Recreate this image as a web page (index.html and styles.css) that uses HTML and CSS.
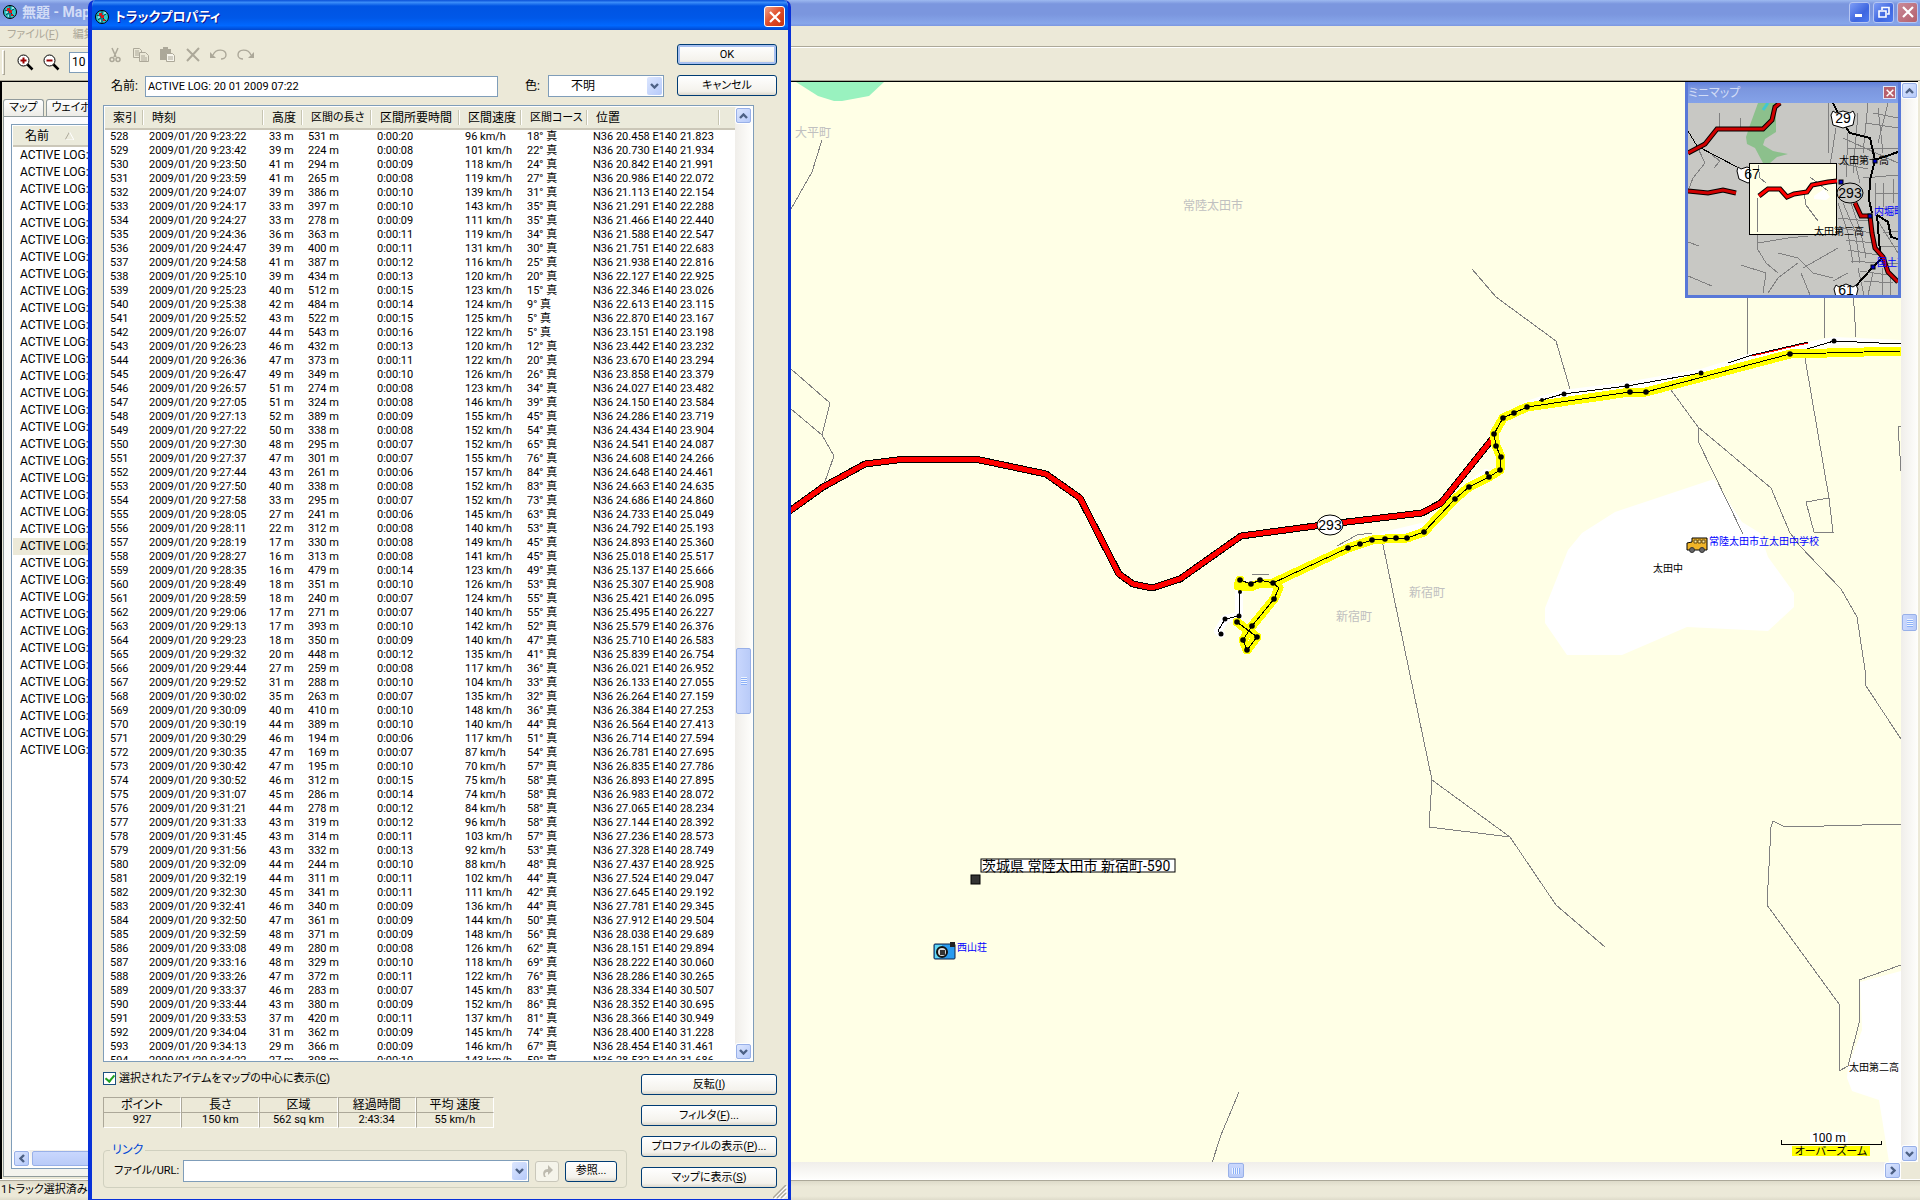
FILE: index.html
```html
<!DOCTYPE html>
<html lang="ja">
<head>
    <meta charset="utf-8">
    <title>無題 - MapSource</title>
    <meta name="viewport" content="width=device-width, initial-scale=1.0">
    <link rel="stylesheet" href="styles.css">
</head>
<body>
<!-- shared icons -->
<svg class="defs" aria-hidden="true">
    <symbol id="globe" viewBox="0 0 14 14">
        <circle cx="7" cy="7" r="6.5" fill="#30c8c8" stroke="#000"/>
        <path d="M2 5l4 2 5-3M3 10l4-3 4 4M7 1v12" stroke="#063c46" fill="none"/>
        <path d="M4 3h3v2h2v3H6V6H4zM8 9h2v2H8z" fill="#d81818"/>
        <path d="M3 7h2M9 3h2M5 11h1" stroke="#fff"/>
    </symbol>
    <symbol id="up" viewBox="0 0 9 6"><path d="M1 5l3.500-3.500L8 5" fill="none" stroke="#4d6185" stroke-width="2.400"/></symbol>
    <symbol id="down" viewBox="0 0 9 6"><path d="M1 1l3.500 3.500L8 1" fill="none" stroke="#4d6185" stroke-width="2.400"/></symbol>
    <symbol id="left" viewBox="0 0 6 9"><path d="M5 1L1.500 4.500 5 8" fill="none" stroke="#4d6185" stroke-width="2.400"/></symbol>
    <symbol id="right" viewBox="0 0 6 9"><path d="M1 1l3.500 3.500L1 8" fill="none" stroke="#4d6185" stroke-width="2.400"/></symbol>
    <symbol id="cross" viewBox="0 0 12 12"><path d="M1 1l10 10M11 1L1 11" stroke="#fff" stroke-width="2.200"/></symbol>
</svg>

<div class="app">
    <header class="app-title">
        <svg class="globe"><use href="#globe"/></svg>
        <span class="app-name">無題 - MapSource</span>
        <button class="cap-btn" aria-label="最小化"><svg viewBox="0 0 12 12"><path d="M1 9.500h7" stroke="#fff" stroke-width="3"/></svg></button>
        <button class="cap-btn" aria-label="元に戻す"><svg viewBox="0 0 12 12"><path d="M4 4V1.500h7V8H9" fill="none" stroke="#fff" stroke-width="1.600"/><path d="M1 5h7v6H1z" fill="none" stroke="#fff" stroke-width="1.600"/></svg></button>
        <button class="cap-btn cap-off" aria-label="閉じる"><svg viewBox="0 0 12 12"><use href="#cross"/></svg></button>
    </header>
    <nav class="menubar"><span>ファイル(<u>F</u>)</span><span>編集(<u>E</u>)</span></nav>
    <div class="toolbar">
        <i class="grip"></i>
        <button class="tool" aria-label="ズームイン"><svg viewBox="0 0 17 17"><path d="M10 10l5.500 5.500" stroke="#000" stroke-width="2.500"/><circle cx="6.500" cy="6.500" r="5.500" fill="#fff" stroke="#000"/><path d="M3.500 6.500h6M6.500 3.500v6" stroke="#900" stroke-width="2"/></svg></button>
        <button class="tool" aria-label="ズームアウト"><svg viewBox="0 0 17 17"><path d="M10 10l5.500 5.500" stroke="#000" stroke-width="2.500"/><circle cx="6.500" cy="6.500" r="5.500" fill="#fff" stroke="#000"/><path d="M3.500 6.500h6" stroke="#900" stroke-width="2"/></svg></button>
        <input class="scale" aria-label="縮尺" value="10 m">
    </div>

    <main class="work">
        <aside class="side">
            <div class="tabs"><button class="tab">マップ</button><button class="tab">ウェイポイント</button></div>
            <div class="tab-page">
                <div class="tracks">
                    <div class="tracks-head">名前 <svg viewBox="0 0 9 8"><path d="M4.500 0L0 8" stroke="#aca899"/><path d="M4.500 0L9 8H0" fill="none" stroke="#fff"/></svg></div>
                    <ul id="tracks"></ul>
                    <div class="bar bar-h">
                        <button aria-label="左へ"><svg class="ic-v"><use href="#left"/></svg></button>
                        <i class="track-thumb"></i>
                    </div>
                </div>
            </div>
        </aside>

        <section class="map-pane">
            <div class="map-box">
            <svg class="map" viewBox="240 82 1661 1080" preserveAspectRatio="xMinYMin slice">
                <defs>
                    <marker id="dot" markerUnits="userSpaceOnUse" markerWidth="8" markerHeight="8" refX="4" refY="4"><circle class="pt" cx="4" cy="4" r="2.800"/></marker>
                </defs>
                <polygon fill="#99f2bf" points="796,82 818,96 834,101 842,101 869,96 884,82"/>
                <polygon fill="#fff" points="1714,479 1615,512 1582,533 1568,550 1545,608 1545,623 1567,655 1622,655 1687,627 1768,631 1794,607 1794,593 1768,557 1760,533 1742,522"/>
                <polygon fill="#fff" points="1901,971 1860,982 1862,1030 1848,1067 1847,1078 1852,1091 1879,1100 1889,1162 1901,1162"/>
                <g class="lanes">
                    <path d="M822 140L812 172 791 209M791 369L830 403 822 435 791 409M822 435L834 456 823 487"/>
                    <path d="M1472 269L1496 297 1556 341 1570 389"/>
                    <path d="M1671 390L1698 427 1771 488 1790 533 1799 545 1841 589 1857 617 1865 670 1866 686 1901 739"/>
                    <path d="M1698 427V441L1743 534M1805 358L1829 498 1833 532H1814L1806 502 1829 498"/>
                    <path d="M1747 290V357M1824 290V338M1853 290L1856 337M1901 426H1898L1901 471"/>
                    <path d="M1382 540L1409 670 1432 780 1429 827 1510 837 1556 905 1605 947M1432 780L1510 837"/>
                    <path d="M1239 1092L1221 1135 1212 1163"/>
                    <path d="M1901 824L1785 827 1773 821 1771 827 1767 905 1839 1004V1071L1848 1066 1859 1023V980L1901 965"/>
                    <path d="M1252 574H1269M1337 546L1357 535 1372 533"/>
                </g>
                <g class="road">
                    <polyline class="road-edge" points="780,519 791,510 823,487 865,464 905,459 975,459 1046,474 1080,498 1119,574 1133,584 1152,588 1180,579 1241,536 1330,524 1422,513 1441,503 1493,438"/>
                    <polyline class="road-fill" points="780,519 791,510 823,487 865,464 905,459 975,459 1046,474 1080,498 1119,574 1133,584 1152,588 1180,579 1241,536 1330,524 1422,513 1441,503 1493,438"/>
                </g>
                <g class="halo">
                    <polyline points="1527,405 1542,400 1563,394 1627,386 1701,373 1752,357 1834,341 1901,344"/>
                    <polyline points="1239,592 1239,616 1225,619 1218,631 1221,634"/>
                    <polyline points="1384,536 1422,527"/>
                    <polyline points="1486,473 1470,485"/>
                </g>
                <g class="log">
                    <polyline points="1527,405 1542,400 1563,394 1627,386 1701,373"/>
                    <polyline points="1728,363 1752,355 1808,342"/>
                    <polyline points="1790,354 1834,341 1901,344"/>
                    <polyline points="1239,592 1239,616 1225,619 1218,631 1221,634"/>
                    <path stroke="#f00" d="M1752 356L1808 343"/>
                </g>
                <g class="sel">
                    <polyline points="1240,580 1238,586 1251,587 1260,583 1273,583"/>
                    <polyline points="1273,583 1348,548 1360,544 1372,540 1385,539 1396,538 1407,538 1424,532 1455,499 1469,487 1489,477 1500,470 1501,457 1496,446 1494,434 1503,418 1514,413 1527,407 1630,392 1646,392 1790,354 1901,351"/>
                    <polyline points="1273,583 1279,588 1274,599 1252,626 1243,640 1247,650 1257,637 1237,622"/>
                </g>
                <g class="log">
                    <polyline class="dots" points="1240,580 1251,584 1260,580 1273,583 1348,548 1360,544 1372,540 1385,539 1396,538 1407,538 1424,532 1455,499 1469,487 1489,477 1500,470 1501,457 1496,446 1494,434 1503,418 1514,413 1527,407 1630,392 1646,392 1790,354"/>
                    <path d="M1790 354L1901 351"/>
                    <path d="M1273 583L1279 588 1274 599"/>
                    <polyline class="dots" points="1274,599 1252,626 1243,640 1247,650 1257,637 1237,622"/>
                </g>
                <g>
                    <circle cx="1240" cy="592" r="2"/><circle cx="1239" cy="616" r="2.500"/><circle cx="1225" cy="619" r="2.500"/><circle cx="1221" cy="634" r="2.500"/>
                    <circle cx="1487" cy="473" r="2"/><circle cx="1542" cy="400" r="2"/><circle cx="1564" cy="394" r="2.500"/><circle cx="1627" cy="386" r="2.500"/><circle cx="1701" cy="373" r="2.500"/><circle cx="1834" cy="341" r="2.500"/>
                </g>
                <ellipse cx="1330" cy="525" rx="13" ry="10" fill="#fff" stroke="#000"/>
                <text class="shield" x="1330" y="530">293</text>

                <text class="area" x="795" y="137">大平町</text>
                <text class="area" x="1183" y="210">常陸太田市</text>
                <text class="area" x="1409" y="597">新宿町</text>
                <text class="area" x="1336" y="621">新宿町</text>
                <text class="place" x="1653" y="572">太田中</text>
                <text class="place" x="1849" y="1071">太田第二高</text>
                <text class="place poi" x="1709" y="545">常陸太田市立太田中学校</text>
                <text class="place poi" x="957" y="951">西山荘</text>

                <!-- school bus -->
                <g stroke="#000">
                    <path d="M1687 550V543L1692 542V538H1707V550Z" fill="#f0b428"/>
                    <path d="M1694 540h3v3h-3zM1698 540h3v3h-3zM1702 540h3v3h-3z" fill="#ffe9a0" stroke="#654a10"/>
                    <circle cx="1692" cy="550" r="2.500" fill="#666" stroke="#333"/><circle cx="1702" cy="550" r="2.500" fill="#666" stroke="#333"/>
                </g>
                <!-- camera -->
                <rect x="934" y="944" width="21" height="15" rx="1" fill="#2a9cf0" stroke="#124"/>
                <rect x="935" y="945" width="7" height="13" fill="#62d8f4"/>
                <rect x="950" y="942" width="5" height="5" fill="#222"/>
                <circle cx="942" cy="952" r="5" fill="#ddd" stroke="#111" stroke-width="2"/>
                <rect x="940" y="950" width="5" height="5" fill="#333"/>
                <rect x="971" y="875" width="9" height="9" fill="#333" stroke="#000"/>
                <rect x="981" y="859" width="194" height="13" fill="#fff" stroke="#000"/>
                <text class="wpt" x="982" y="871">茨城県 常陸太田市 新宿町-590</text>

                <rect x="1810" y="1132" width="38" height="11" fill="#fff"/>
                <text class="scale-text" x="1829" y="1142">100 m</text>
                <path class="scale-bar" d="M1781 1140v4h100v-3"/>
                <rect x="1792" y="1146" width="78" height="10" fill="#ff0"/>
                <text class="over" x="1831" y="1155">オーバーズーム</text>
            </svg>

            <div class="mini">
                <div class="mini-title">ミニマップ<button class="mini-x" aria-label="閉じる"><svg viewBox="0 0 12 12"><use href="#cross"/></svg></button></div>
                <svg class="mini-map" viewBox="0 0 210 192">
                    <rect width="210" height="192" fill="#c8c8c4"/>
                    <path fill="#8cc08c" d="M70 0L62 22 58 34 59 41 67 45 75 60H82L89 54 100 51 85 48 75 42 77 36 88 29V0Z"/>
                    <path d="M80 0L75 7" stroke="#40c8d0" stroke-width="3"/>
                    <g class="streets">
                        <path d="M31 10V25M52 15V26M9 43L17 60 5 75 0 88M24 52L32 58 26 65M70 130L69 145 78 160 90 170M70 140L100 135 120 133M53 162L78 170 75 190M0 139L11 143M0 173L24 183M90 150L110 155 125 170 145 175M115 165L150 145M110 160L90 175 80 190M113 170L122 192"/>
                        <path d="M140 0V50M148 25L140 75M155 35L210 60M160 30L158 75M170 10L165 70M180 0L175 50M190 5L195 50M200 0L190 40M185 10L210 15M178 20L210 25M160 45H210M150 60L180 66M165 52L172 80M175 75L210 72M187 80V105H210M195 80V104M205 76V100M187 90H210M150 100L160 130 165 160M155 100L167 128 172 160M163 100L173 130 178 155M150 115L180 118M152 125L184 130M158 137L186 140M160 147L190 152M163 158L190 160M172 168L200 172M176 178L205 180M185 170L180 192M194 165L195 192M202 172V192M170 165L176 192M190 118L210 150M195 130L210 128M193 143H210M200 160H210M145 178L160 170"/>
                    </g>
                    <path class="blk thin" d="M0 28L9 43 49 64"/>
                    <path class="blk" d="M145 0L155 20 162 30 182 35 187 57 182 77 181 97 184 110M187 57L210 49M189 112L200 119 203 134 210 136M189 112L192 149M195 154L185 164 167 184"/>
                    <g class="mini-edge"><path d="M0 50L17 41 29 26H75L84 17 87 4 92 0M0 88L20 90 35 87 48 90M167 100L173 113H182L184 130 187 145 195 154 200 169 210 179"/></g>
                    <g class="mini-red"><path d="M0 50L17 41 29 26H75L84 17 87 4 92 0M0 88L20 90 35 87 48 90M167 100L173 113H182L184 130 187 145 195 154 200 169 210 179"/></g>
                    <g fill="#fff" stroke="#000"><path d="M145 8l3 2 7-2 7 2 3-2 2 4-2 10-10 3-10-3-2-10zM50 64l3 2 6-2 6 2 4-2 2 3-2 9-9 4-9-4-2-8zM148 182l3 2 7-3 7 3 3-2 2 4-2 8h-20l-2-8z"/></g>
                    <text class="mini-no" x="155" y="20">29</text>
                    <rect x="61.500" y="60.500" width="87" height="71" fill="#ffffe6" stroke="#000"/>
                    <path class="streets" d="M70 62L72 75 78 80M70 95L69 130M122 74L140 88M116 90L118 102 130 118"/>
                    <polygon fill="#fff" points="126,93 136,86 142,94 138,97 126,96"/>
                    <polyline class="mini-edge" points="71,93 80,86 92,86 99,94 106,91 119,89 124,82 140,79 149,78"/>
                    <polyline class="mini-bright" points="71,93 80,86 92,86 99,94 106,91 119,89 124,82 140,79 149,78"/>
                    <text class="mini-no" x="64" y="76">67</text>
                    <ellipse cx="162" cy="90" rx="13" ry="10" fill="#c8c8c4" stroke="#000"/>
                    <text class="mini-no" x="162" y="95">293</text>
                    <text class="mini-no" x="158" y="192">61</text>
                    <g fill="#0000c8" stroke="#000"><rect x="151" y="77" width="4" height="4"/><rect x="180" y="111" width="4" height="4"/><rect x="183" y="162" width="4" height="4"/><rect x="185" y="56" width="4" height="4"/></g>
                    <text class="place" x="151" y="61">太田第一高</text>
                    <text class="place" x="126" y="132">太田第二高</text>
                    <text class="place poi" x="186" y="112">内堀町</text>
                    <text class="place poi" x="189" y="163">国土交</text>
                </svg>
            </div>
            </div>
            <div class="bar bar-v">
                <button aria-label="上へ"><svg class="ic-h"><use href="#up"/></svg></button>
                <i class="map-thumb-v"></i>
                <button class="last" aria-label="下へ"><svg class="ic-h"><use href="#down"/></svg></button>
            </div>
            <div class="bar bar-h">
                <i class="map-thumb-h"></i>
                <button class="last" aria-label="右へ"><svg class="ic-v"><use href="#right"/></svg></button>
            </div>
        </section>
    </main>
    <footer class="status">1トラック選択済み</footer>
</div>

<form class="dialog" role="dialog" aria-label="トラックプロパティ" onsubmit="return false">
    <div class="dlg-title">
        <svg class="globe"><use href="#globe"/></svg>
        <span>トラックプロパティ</span>
        <button type="button" class="cap-btn cap-close" aria-label="閉じる"><svg viewBox="0 0 12 12"><use href="#cross"/></svg></button>
    </div>
    <div class="dlg-body">
        <div class="dlg-top">
            <div class="edit-tools">
                <svg viewBox="0 0 18 16"><path d="M6 1l4 9M12 1L8 10" stroke="#aca899" stroke-width="1.500"/><circle cx="6" cy="12.500" r="2" fill="none" stroke="#aca899" stroke-width="1.500"/><circle cx="12" cy="12.500" r="2" fill="none" stroke="#aca899" stroke-width="1.500"/></svg>
                <svg viewBox="0 0 18 16"><g fill="#ece9d8" stroke="#aca899"><path d="M1.500 1.500h6l2 2v7h-8z"/><path d="M7.500 5.500h6l3 3v6h-9z"/></g><path d="M3 4h4M3 6h4M3 8h4M9 9h4M9 11h6M9 13h6" stroke="#aca899"/></svg>
                <svg viewBox="0 0 18 16"><path d="M2 2h3V0h5v2h3v11H2z" fill="#aca899"/><path d="M8.500 6.500h6l2 2v6h-8z" fill="#f7f5ec" stroke="#aca899"/><path d="M10 10h5M10 12h5" stroke="#aca899"/></svg>
                <svg viewBox="0 0 18 16"><path d="M3 2l12 12M15 1L3 14" stroke="#aca899" stroke-width="2"/></svg>
                <svg viewBox="0 0 18 16"><path d="M3 8C6 1 16 2 16 8c0 3-3 4-5 4" fill="none" stroke="#aca899" stroke-width="1.400"/><path d="M0 5v6h6z" fill="#aca899"/></svg>
                <svg viewBox="0 0 18 16"><path d="M15 8C12 1 2 2 2 8c0 3 3 4 5 4" fill="none" stroke="#aca899" stroke-width="1.400"/><path d="M18 5v6h-6z" fill="#aca899"/></svg>
            </div>
            <button class="btn btn-default">OK</button>
            <div class="name-row">
                <label class="lbl-name" for="name">名前:</label>
                <input id="name" class="field" value="ACTIVE LOG: 20 01 2009 07:22">
                <label class="lbl-color" for="color">色:</label>
                <span class="combo combo-color"><select id="color"><option>不明</option></select><i><svg class="ic-h"><use href="#down"/></svg></i></span>
            </div>
            <button class="btn" type="button">キャンセル</button>
        </div>

        <div class="list">
            <div class="list-view">
                <table class="points">
                    <colgroup><col class="c-no"><col class="c-time"><col class="c-alt"><col class="c-len"><col class="c-dur"><col class="c-speed"><col class="c-course"><col class="c-pos"><col></colgroup>
                    <thead><tr><th>索引</th><th>時刻</th><th>高度</th><th class="small">区間の長さ</th><th>区間所要時間</th><th>区間速度</th><th class="small">区間コース</th><th>位置</th><th></th></tr></thead>
                    <tbody id="points"></tbody>
                </table>
            </div>
            <div class="bar bar-v">
                <button type="button" aria-label="上へ"><svg class="ic-h"><use href="#up"/></svg></button>
                <i class="list-thumb"></i>
                <button type="button" class="last" aria-label="下へ"><svg class="ic-h"><use href="#down"/></svg></button>
            </div>
        </div>

        <div class="dlg-bottom">
            <div class="info">
                <label class="check small"><input type="checkbox" checked><span>選択されたアイテムをマップの中心に表示(<u>C</u>)</span></label>
                <table class="stats">
                    <tr><th>ポイント</th><th>長さ</th><th>区域</th><th>経過時間</th><th>平均 速度</th></tr>
                    <tr><td>927</td><td>150 km</td><td>562 sq km</td><td>2:43:34</td><td>55 km/h</td></tr>
                </table>
                <fieldset class="link">
                    <legend>リンク</legend>
                    <div class="link-row">
                        <label class="small" for="url">ファイル/URL:</label>
                        <span class="combo combo-url"><select id="url"><option></option></select><i><svg class="ic-h"><use href="#down"/></svg></i></span>
                        <button type="button" class="btn btn-go" disabled aria-label="開く"><svg viewBox="0 0 12 14"><path d="M3 13C1 8 3 5 7 5V1l5 5-5 5V8C4 8 3 10 5 13z" fill="#bdbaae"/></svg></button>
                        <button type="button" class="btn btn-browse">参照...</button>
                    </div>
                </fieldset>
            </div>
            <div class="actions">
                <button type="button" class="btn">反転(<u>I</u>)</button>
                <button type="button" class="btn">フィルタ(<u>F</u>)...</button>
                <button type="button" class="btn">プロファイルの表示(<u>P</u>)...</button>
                <button type="button" class="btn">マップに表示(<u>S</u>)</button>
            </div>
        </div>
        <svg class="sizer" viewBox="0 0 14 14"><path d="M1 14L14 1M5 14l9-9M9 14l5-5" stroke="#fff" stroke-width="2"/><path d="M0 13L13 0M4 13l9-9M8 13l5-5" stroke="#aca899" stroke-width="1.500"/></svg>
    </div>
</form>
<script src="script.js"></script>
</body>
</html>
```

FILE: styles.css
```css
* {
    box-sizing: border-box;
}
body {
    margin: 0;
    height: 100vh;
    overflow: hidden;
    background: #ece9d8;
    color: #000;
    font: 12px/14px Roboto, "Noto Sans CJK JP", sans-serif;
    font-feature-settings: "palt";
}
button, input, select {
    font: inherit;
    font-feature-settings: inherit;
    color: inherit;
    margin: 0;
    padding: 0;
    border-radius: 0;
}
.small {
    font-size: 11px;
}
.defs {
    display: none;
}
.globe {
    width: 14px;
    height: 14px;
}
.ic-h {
    width: 9px;
    height: 6px;
}
.ic-v {
    width: 6px;
    height: 9px;
}

/* main window */
.app {
    display: flex;
    flex-direction: column;
    height: 100vh;
}
.app-title {
    display: flex;
    align-items: center;
    gap: 3px;
    height: 26px;
    padding: 0 2px 2px 3px;
    background: linear-gradient(#9db9f0, #7b96de 15%, #7b96de 55%, #87a6ea 90%, #7c97e0);
}
.app-name {
    flex: 1;
    margin-left: 2px;
    color: #d3ddf6;
    font-size: 14px;
    font-weight: bold;
}
.cap-btn {
    display: flex;
    align-items: center;
    justify-content: center;
    width: 21px;
    height: 21px;
    border: 1px solid #b6c6f2;
    border-radius: 3px;
    background: linear-gradient(135deg, #7e9df5, #3e66e0 60%, #4d7af0);
}
.cap-btn svg {
    width: 12px;
    height: 12px;
}
.cap-off {
    background: linear-gradient(135deg, #c98a98, #b4606c);
}
.cap-close {
    border-color: #fff;
    background: linear-gradient(135deg, #f0a088, #e04c28 50%, #c83410);
}
.menubar {
    display: flex;
    gap: 14px;
    height: 21px;
    padding: 2px 7px;
    border-bottom: 1px solid #aca899;
    color: #aca899;
    font-size: 11px;
}
.toolbar {
    display: flex;
    align-items: center;
    gap: 9px;
    height: 34px;
    padding: 0 2px 4px;
    border-top: 1px solid #fff;
    border-bottom: 1px solid #aca899;
}
.grip {
    width: 3px;
    height: 25px;
    margin-right: 3px;
    border: 1px solid #aca899;
    border-color: #fff #aca899 #aca899 #fff;
}
.tool {
    width: 17px;
    height: 17px;
    border: 0;
    background: none;
}
.tool svg {
    display: block;
}
.scale {
    width: 90px;
    height: 21px;
    padding-left: 2px;
    border: 1px solid #7f9db9;
    background: #fff;
}
.work {
    display: flex;
    flex: 1;
    min-height: 0;
    padding-right: 2px;
    border-bottom: 1px solid #fff;
}

/* track list on the left */
.side {
    display: flex;
    flex-direction: column;
    width: 240px;
    padding: 17px 4px 2px 1px;
    border: solid #000;
    border-width: 1px 0 0 2px;
}
.tabs {
    display: flex;
    gap: 2px;
}
.tab {
    height: 17px;
    padding: 0 5px;
    border: 1px solid #919b9c;
    border-bottom: 0;
    border-radius: 3px 3px 0 0;
    background: linear-gradient(#fff, #ecebe6);
    font-size: 11px;
    white-space: nowrap;
}
.tab-page {
    display: flex;
    flex: 1;
    min-height: 0;
    padding: 7px;
    border: 1px solid #919b9c;
    background: linear-gradient(#fcfcfe, #f4f3ee);
}
.tracks {
    display: flex;
    flex-direction: column;
    flex: 1;
    padding: 1px;
    border: 1px solid #7f9db9;
    background: #fff;
}
.tracks-head {
    display: flex;
    gap: 16px;
    align-items: center;
    height: 21px;
    padding: 0 12px;
    border-bottom: 2px solid #cbc7b8;
    background: #ebeadb;
}
.tracks-head svg {
    width: 9px;
    height: 8px;
}
#tracks {
    flex: 1;
    margin: 0;
    padding: 0;
    list-style: none;
}
#tracks li {
    height: 17px;
    padding-left: 7px;
    line-height: 17px;
}
#tracks .current {
    background: #ece9d8;
}

/* scroll bars */
.bar {
    display: flex;
    padding: 1px;
    background: linear-gradient(90deg, #f0eeea, #fefefc);
}
.bar-v {
    flex-direction: column;
    width: 17px;
}
.bar-h {
    height: 17px;
    background: linear-gradient(#f0eeea, #fefefc);
}
.bar button {
    display: flex;
    align-items: center;
    justify-content: center;
    flex: none;
    width: 15px;
    height: 15px;
    border: 1px solid #98b0e8;
    border-radius: 2px;
    background: linear-gradient(135deg, #dce6fe, #b6cafa);
    box-shadow: 0 0 0 1px #fff;
}
.bar i {
    flex: none;
    border: 1px solid #98b0e8;
    border-radius: 2px;
}
.bar-v i {
    background: repeating-linear-gradient(#eef4fe 0 1px, #8cb0f8 1px 2px) center / 6px 8px no-repeat, linear-gradient(90deg, #c9d7fd, #b9cbf8);
}
.bar-h i {
    background: repeating-linear-gradient(90deg, #eef4fe 0 1px, #8cb0f8 1px 2px) center / 8px 6px no-repeat, linear-gradient(#c9d7fd, #b9cbf8);
}
.bar-v .last {
    margin-top: auto;
}
.bar-h .last {
    margin-left: auto;
}
.bar .track-thumb {
    width: 140px;
    margin-left: 3px;
}
.bar .map-thumb-v {
    height: 17px;
    margin-top: 516px;
}
.bar .map-thumb-h {
    width: 16px;
    margin-left: 987px;
}
.bar .list-thumb {
    height: 66px;
    margin-top: 525px;
}

/* map */
.map-pane {
    display: grid;
    flex: 1;
    grid-template-columns: minmax(0, 1fr) 17px;
    grid-template-rows: minmax(0, 1fr) 17px;
    min-width: 0;
    border-top: 1px solid #000;
}
.map-box {
    position: relative;
    overflow: hidden;
    background: #ffffe6;
}
.map {
    display: block;
    width: 100%;
    height: 100%;
}
.lanes path, .streets {
    fill: none;
    stroke: #808080;
    shape-rendering: crispEdges;
}
.road polyline {
    fill: none;
    stroke-linejoin: round;
    shape-rendering: crispEdges;
}
.road-edge {
    stroke: #000;
    stroke-width: 7;
}
.road-fill {
    stroke: #f00;
    stroke-width: 5;
}
.halo polyline {
    fill: none;
    stroke: #fff;
    stroke-width: 8;
    stroke-linejoin: round;
    stroke-linecap: round;
}
.sel polyline {
    fill: none;
    stroke: #ff0;
    stroke-width: 9;
    stroke-linejoin: round;
    stroke-linecap: round;
    shape-rendering: crispEdges;
}
.log polyline, .log path {
    fill: none;
    stroke: #000;
    shape-rendering: crispEdges;
}
.log path[stroke] {
    stroke: #f00;
}
.log .dots {
    marker: url(#dot);
}
.pt {
    shape-rendering: auto;
}
.area {
    font-size: 12px;
    fill: #c0c0c0;
}
.place {
    font-size: 10px;
}
.poi {
    fill: #00f;
}
.shield, .mini-no {
    font: 14px "Liberation Sans", sans-serif;
    text-anchor: middle;
}
.wpt {
    font-size: 14px;
}
.scale-text {
    font-size: 12px;
    text-anchor: middle;
}
.scale-bar {
    fill: none;
    stroke: #000;
    shape-rendering: crispEdges;
}
.over {
    font-size: 11px;
    text-anchor: middle;
}
.mini {
    position: absolute;
    top: 0;
    right: 0;
    width: 216px;
    border: 3px solid #5878d8;
    border-top: 0;
}
.mini-title {
    display: flex;
    align-items: center;
    justify-content: space-between;
    height: 21px;
    background: linear-gradient(#6080dc, #7b96de 30%, #84a2e8);
    color: #d3ddf6;
}
.mini-x {
    display: flex;
    align-items: center;
    justify-content: center;
    width: 13px;
    height: 13px;
    margin-right: 2px;
    border: 1px solid #dfe6fa;
    background: #b8606c;
}
.mini-x svg {
    flex: none;
    width: 8px;
    height: 8px;
}
.mini-map {
    display: block;
}
.blk {
    fill: none;
    stroke: #000;
    stroke-width: 2;
    shape-rendering: crispEdges;
}
.thin {
    stroke-width: 1;
}
.mini-edge {
    fill: none;
    stroke: #000;
    stroke-width: 5;
}
.mini-red {
    fill: none;
    stroke: #d00000;
    stroke-width: 3;
}
.mini-bright {
    fill: none;
    stroke: #f00;
    stroke-width: 3;
}
.status {
    height: 20px;
    padding: 2px 1px;
    border-top: 1px solid #aca899;
    background: linear-gradient(#dedbca, #ece9d8 30%, #ece9d8 80%, #dedbca);
    font-size: 11px;
}

/* dialog */
.dialog {
    position: absolute;
    top: 0;
    bottom: 0;
    left: 88px;
    display: flex;
    flex-direction: column;
    width: 703px;
    border: solid #0831d9;
    border-width: 0 3px 1px 4px;
    border-radius: 7px 7px 0 0;
    overflow: hidden;
    background: #ece9d8;
}
.dlg-title {
    display: flex;
    align-items: center;
    gap: 6px;
    height: 30px;
    padding: 3px 3px 0;
    background: linear-gradient(#0a50d8, #3a8cf8 8%, #0054e3 20%, #0058e8 60%, #0068ff 85%, #0048d0);
    color: #fff;
    font-size: 13px;
    font-weight: bold;
    text-shadow: 1px 1px #0f1089;
}
.dlg-title span {
    flex: 1;
}
.dlg-body {
    position: relative;
    display: flex;
    flex: 1;
    flex-direction: column;
    min-height: 0;
    padding: 14px 11px 11px;
}
.dlg-top {
    display: grid;
    grid-template-columns: 1fr 100px;
    grid-template-rows: 21px 22px;
    gap: 10px 13px;
}
.edit-tools {
    display: flex;
    align-items: center;
    gap: 8px;
    padding-left: 3px;
}
.edit-tools svg {
    width: 18px;
    height: 16px;
}
.name-row {
    display: flex;
    align-items: center;
    padding-left: 8px;
}
.lbl-name {
    width: 34px;
}
.lbl-color {
    width: 23px;
    margin-left: 27px;
}
.field {
    flex: 1;
    height: 21px;
    padding: 0 2px;
    border: 1px solid #7f9db9;
    background: #fff;
    font-size: 11px;
}
.combo {
    position: relative;
    display: block;
    height: 22px;
}
.combo select {
    width: 100%;
    height: 100%;
    padding-left: 22px;
    border: 1px solid #7f9db9;
    background: #fff;
    appearance: none;
}
.combo i {
    position: absolute;
    top: 2px;
    right: 2px;
    bottom: 2px;
    display: flex;
    align-items: center;
    justify-content: center;
    width: 15px;
    border-radius: 2px;
    background: linear-gradient(135deg, #dce6fe, #b6cafa);
    pointer-events: none;
}
.combo-color {
    width: 116px;
}
.combo-url {
    flex: 1;
}
.btn {
    height: 21px;
    border: 1px solid #003c74;
    border-radius: 3px;
    background: linear-gradient(#fff, #f4f2ec 80%, #dcd8cc);
    font-size: 11px;
}
.btn-default {
    box-shadow: inset 0 0 0 2px #a8c0f0;
}
.list {
    display: flex;
    flex: 1;
    min-height: 0;
    margin: 8px 23px 10px 0;
    padding: 1px;
    border: 1px solid #7f9db9;
    background: #fff;
}
.list-view {
    flex: 1;
    overflow: hidden;
}
.points {
    width: 100%;
    border-collapse: collapse;
    table-layout: fixed;
    white-space: nowrap;
}
.points th {
    position: relative;
    height: 22px;
    padding: 0 0 0 8px;
    border-bottom: 2px solid #cbc7b8;
    background: #ebeadb;
    font-weight: normal;
    text-align: left;
}
/* divider between two column heads */
.points th + th::before {
    content: "";
    position: absolute;
    top: 3px;
    bottom: 3px;
    left: -2px;
    border-left: 1px solid #c7c5b2;
    border-right: 1px solid #fff;
}
.points td {
    height: 14px;
    padding: 0 0 0 5px;
    font-size: 11px;
    line-height: 14px;
}
.c-no {
    width: 39px;
}
.c-time {
    width: 120px;
}
.c-alt {
    width: 39px;
}
.c-len {
    width: 69px;
}
.c-dur {
    width: 88px;
}
.c-speed {
    width: 62px;
}
.c-course {
    width: 66px;
}
.c-pos {
    width: 132px;
}
.dlg-bottom {
    display: flex;
    gap: 14px;
}
.info {
    flex: 1;
}
.check {
    display: flex;
    align-items: center;
    gap: 3px;
    height: 13px;
}
.check input {
    width: 13px;
    height: 13px;
    border: 1px solid #1c5180;
    background: #fff;
    appearance: none;
}
.check input:checked::before {
    content: "";
    display: block;
    width: 4px;
    height: 7px;
    margin: 0 0 0 3px;
    border: solid #21a121;
    border-width: 0 2px 2px 0;
    transform: rotate(40deg);
}
.stats {
    width: 391px;
    margin: 12px 0 15px;
    border-spacing: 0;
    table-layout: fixed;
    text-align: center;
}
.stats th, .stats td {
    height: 15px;
    padding: 0;
    border: solid #aca899;
    border-width: 1px 1px 0;
    border-right-color: #fff;
    font-weight: normal;
    line-height: 14px;
}
.stats td {
    border-bottom: 1px solid #fff;
    font-size: 11px;
}
.link {
    min-width: 0;
    margin: 0;
    padding: 0 9px 5px 10px;
    border: 1px solid #d0d0bf;
    border-radius: 4px;
}
.link legend {
    margin-left: -4px;
    padding: 0 2px;
    color: #0046d5;
}
.link-row {
    display: flex;
    align-items: center;
    gap: 6px;
    padding-top: 3px;
}
.link-row label {
    width: 63px;
    white-space: nowrap;
}
.btn-go {
    width: 24px;
    border-color: #c9c7ba;
    background: #f5f4ea;
}
.btn-go svg {
    display: block;
    width: 12px;
    height: 14px;
    margin: auto;
}
.btn-browse {
    width: 52px;
}
.actions {
    display: flex;
    flex-direction: column;
    justify-content: space-between;
    width: 136px;
    padding-top: 2px;
}
.sizer {
    position: absolute;
    right: 1px;
    bottom: 0;
    width: 14px;
    height: 14px;
}
```

FILE: script.js
```js
// time, altitude, leg length, leg seconds, speed, course, north, east
const log = `
9:23:22 33 531 20 96 18 20.458 21.823
9:23:42 39 224 08 101 22 20.730 21.934
9:23:50 41 294 09 118 24 20.842 21.991
9:23:59 41 265 08 119 27 20.986 22.072
9:24:07 39 386 10 139 31 21.113 22.154
9:24:17 33 397 10 143 35 21.291 22.288
9:24:27 33 278 09 111 35 21.466 22.440
9:24:36 36 363 11 119 34 21.588 22.547
9:24:47 39 400 11 131 30 21.751 22.683
9:24:58 41 387 12 116 25 21.938 22.816
9:25:10 39 434 13 120 20 22.127 22.925
9:25:23 40 512 15 123 15 22.346 23.026
9:25:38 42 484 14 124 9 22.613 23.115
9:25:52 43 522 15 125 5 22.870 23.167
9:26:07 44 543 16 122 5 23.151 23.198
9:26:23 46 432 13 120 12 23.442 23.232
9:26:36 47 373 11 122 20 23.670 23.294
9:26:47 49 349 10 126 26 23.858 23.379
9:26:57 51 274 08 123 34 24.027 23.482
9:27:05 51 324 08 146 39 24.150 23.584
9:27:13 52 389 09 155 45 24.286 23.719
9:27:22 50 338 08 152 54 24.434 23.904
9:27:30 48 295 07 152 65 24.541 24.087
9:27:37 47 301 07 155 76 24.608 24.266
9:27:44 43 261 06 157 84 24.648 24.461
9:27:50 40 338 08 152 83 24.663 24.635
9:27:58 33 295 07 152 73 24.686 24.860
9:28:05 27 241 06 145 63 24.733 25.049
9:28:11 22 312 08 140 53 24.792 25.193
9:28:19 17 330 08 149 45 24.893 25.360
9:28:27 16 313 08 141 45 25.018 25.517
9:28:35 16 479 14 123 49 25.137 25.666
9:28:49 18 351 10 126 53 25.307 25.908
9:28:59 18 240 07 124 55 25.421 26.095
9:29:06 17 271 07 140 55 25.495 26.227
9:29:13 17 393 10 142 52 25.579 26.376
9:29:23 18 350 09 140 47 25.710 26.583
9:29:32 20 448 12 135 41 25.839 26.754
9:29:44 27 259 08 117 36 26.021 26.952
9:29:52 31 288 10 104 33 26.133 27.055
9:30:02 35 263 07 135 32 26.264 27.159
9:30:09 40 410 10 148 36 26.384 27.253
9:30:19 44 389 10 140 44 26.564 27.413
9:30:29 46 194 06 117 51 26.714 27.594
9:30:35 47 169 07 87 54 26.781 27.695
9:30:42 47 195 10 70 57 26.835 27.786
9:30:52 46 312 15 75 58 26.893 27.895
9:31:07 45 286 14 74 58 26.983 28.072
9:31:21 44 278 12 84 58 27.065 28.234
9:31:33 43 319 12 96 58 27.144 28.392
9:31:45 43 314 11 103 57 27.236 28.573
9:31:56 43 332 13 92 53 27.328 28.749
9:32:09 44 244 10 88 48 27.437 28.925
9:32:19 44 311 11 102 44 27.524 29.047
9:32:30 45 341 11 111 42 27.645 29.192
9:32:41 46 340 09 136 44 27.781 29.345
9:32:50 47 361 09 144 50 27.912 29.504
9:32:59 48 371 09 148 56 28.038 29.689
9:33:08 49 280 08 126 62 28.151 29.894
9:33:16 48 329 10 118 69 28.222 30.060
9:33:26 47 372 11 122 76 28.286 30.265
9:33:37 46 283 07 145 83 28.334 30.507
9:33:44 43 380 09 152 86 28.352 30.695
9:33:53 37 420 11 137 81 28.366 30.949
9:34:04 31 362 09 145 74 28.400 31.228
9:34:13 29 366 09 146 67 28.454 31.461
9:34:22 27 398 10 143 59 28.532 31.686`;

document.getElementById('points').innerHTML = log.trim().split('\n').map(function (line, i) {
    const [time, alt, len, sec, speed, course, n, e] = line.split(' ');
    const cells = [528 + i, '2009/01/20 ' + time, alt + ' m', len + ' m', '0:00:' + sec,
        speed + ' km/h', course + '° 真', 'N36 ' + n + ' E140 ' + e, ''];
    return '<tr><td>' + cells.join('</td><td>') + '</td></tr>';
}).join('');

let items = '';
for (let i = 0; i < 36; i++) {
    items += '<li' + (i === 23 ? ' class="current"' : '') + '>ACTIVE LOG:</li>';
}
document.getElementById('tracks').innerHTML = items;
```
